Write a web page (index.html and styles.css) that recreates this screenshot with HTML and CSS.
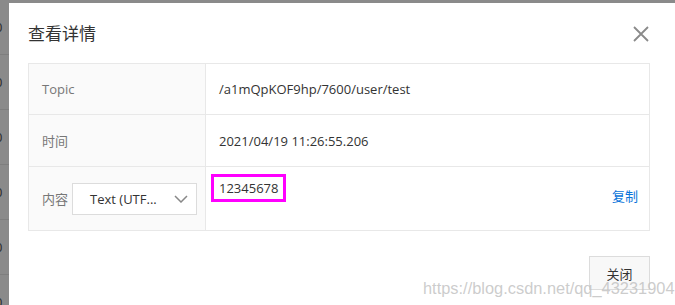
FILE: index.html
```html
<!DOCTYPE html>
<html lang="zh-CN">
<head>
<meta charset="utf-8">
<title>查看详情</title>
<link rel="stylesheet" href="styles.css">
</head>
<body>
<div class="backdrop">
  <div class="bg-row"><span>0</span></div>
  <div class="bg-row"><span>0</span></div>
  <div class="bg-row"><span>0</span></div>
  <div class="bg-row"><span>0</span></div>
  <div class="bg-row"><span>0</span></div>
  <div class="bg-row"><span>0</span></div>
</div>
<div class="page">
  <div class="dialog">
    <div class="header">
      <h1 class="title">查看详情</h1>
      <button class="close" aria-label="关闭">
        <svg width="16" height="16" viewBox="0 0 16 16"><path d="M1 1 L15 15 M15 1 L1 15" stroke="#8a8a8a" stroke-width="1.8" fill="none"/></svg>
      </button>
    </div>
    <div class="table">
      <div class="row r1">
        <div class="label">Topic</div>
        <div class="value">/a1mQpKOF9hp/7600/user/test</div>
      </div>
      <div class="row r2">
        <div class="label">时间</div>
        <div class="value">2021/04/19 11:26:55.206</div>
      </div>
      <div class="row r3">
        <div class="label label-content">内容
          <div class="select"><span>Text (UTF...</span>
            <svg width="14" height="8" viewBox="0 0 14 8"><path d="M1 1 L7 7 L13 1" stroke="#888" stroke-width="1.5" fill="none"/></svg>
          </div>
        </div>
        <div class="value value-top">
          <span class="mark">12345678</span>
          <a class="copy" href="#">复制</a>
        </div>
      </div>
    </div>
    <div class="footer">
      <button class="btn">关闭</button>
    </div>
  </div>
</div>
<div class="watermark">https://blog.csdn.net/qq_43231904</div>
</body>
</html>
```

FILE: styles.css
```css
html, body {
  margin: 0;
  padding: 0;
  width: 675px;
  height: 305px;
  overflow: hidden;
  background: #8a8a8a;
  font-family: "Open Sans", "Noto Sans CJK SC", sans-serif;
  color: #333;
}
.backdrop {
  position: absolute;
  left: 0;
  top: 0;
  width: 9px;
  height: 305px;
  overflow: hidden;
}
.bg-row {
  height: 54px;
  border-bottom: 1px solid #7e7e7e;
  display: flex;
  align-items: center;
  font-size: 13px;
  color: #2a2a2a;
}
.bg-row span {
  margin-left: -5px;
}
.page {
  position: relative;
  padding: 3px 0 0 9px;
  height: 302px;
}
.dialog {
  background: #fff;
  height: 302px;
  padding: 0 25px 0 19px;
  box-sizing: border-box;
}
.header {
  display: flex;
  justify-content: space-between;
  align-items: center;
  height: 60px;
}
.title {
  margin: 0;
  font-size: 17px;
  font-weight: normal;
  color: #333;
  line-height: 24px;
  padding-top: 2px;
}
.close {
  background: none;
  border: none;
  padding: 0;
  margin-right: 1px;
  margin-top: 2px;
  width: 16px;
  height: 16px;
  display: flex;
}
.table {
  border: 1px solid #e8e8e8;
  font-size: 13px;
}
.row {
  display: grid;
  grid-template-columns: 177px 1fr;
}
.row + .row {
  border-top: 1px solid #e8e8e8;
}
.r1 { height: 50px; }
.r2 { height: 51px; }
.r3 { height: 63px; }
.label {
  background: #fafafa;
  border-right: 1px solid #e8e8e8;
  color: #777;
  display: flex;
  align-items: center;
  padding-left: 13px;
}
.value {
  display: flex;
  align-items: center;
  padding-left: 13px;
  padding-right: 11px;
  color: #333;
}
.label-content {
  gap: 4px;
}
.select {
  width: 125px;
  height: 32px;
  border: 1px solid #dcdcdc;
  background: #fff;
  display: flex;
  align-items: center;
  justify-content: space-between;
  padding: 0 8px 0 17px;
  box-sizing: border-box;
  color: #333;
}
.select svg { margin-top: 1px; }
.value-top {
  align-items: flex-start;
  justify-content: space-between;
  padding-top: 7px;
}
.mark {
  margin-left: -8px;
  border: 3px solid #f0f;
  padding: 2px 5px;
  line-height: 18px;
}
.copy {
  color: #0a74da;
  text-decoration: none;
  margin-top: 12px;
}
.footer {
  display: flex;
  justify-content: flex-end;
  padding-top: 25px;
}
.btn {
  width: 61px;
  height: 34px;
  border: 1px solid #dcdcdc;
  background: #f8f8f8;
  font-family: inherit;
  font-size: 13px;
  color: #333;
  padding: 0;
}
.watermark {
  position: absolute;
  left: 423px;
  top: 279px;
  font-family: "Liberation Sans", Arial, sans-serif;
  font-size: 16.4px;
  color: rgba(195, 195, 195, 0.85);
  white-space: nowrap;
}
```
